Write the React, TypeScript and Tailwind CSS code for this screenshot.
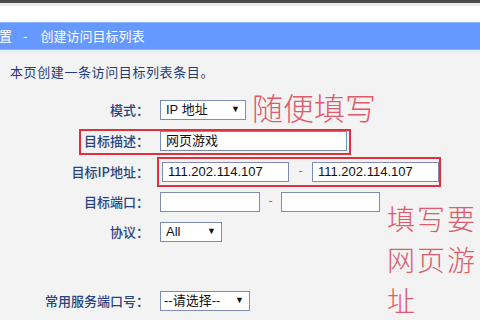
import React from "react";

const Label = ({ children }: { children: React.ReactNode }) => (
  <div className="w-[150px] shrink-0 pr-[1px] text-right text-[13px] font-medium text-[#28447e]">{children}</div>
);

const Box = ({ w, children }: { w: string; children?: React.ReactNode }) => (
  <div className={`${w} h-[20px] bg-white border border-[#7d8db6] flex items-center px-[5px] text-[13px] text-[#111] font-['Liberation_Sans','Noto_Sans_CJK_SC',sans-serif]`}>
    {children}
  </div>
);

const Arrow = () => <span className="ml-auto text-[9px] text-[#111]">▼</span>;

export default function App() {
  return (
    <div className="relative w-[480px] h-[320px] overflow-hidden bg-[#f3f3f3] font-['Noto_Sans_CJK_SC',sans-serif]">
      <div className="h-[3px] bg-[#4a4a4a]" />
      <div className="h-[3px] bg-[#e9e9e9]" />
      <div className="h-[16px] bg-white" />
      <div className="h-[28px] bg-[#6699ff] border-y border-[#8db2ff] flex items-center text-[13px] text-white whitespace-pre">
        <span className="-ml-[1px]">置</span>
        <span className="ml-[11px]">-</span>
        <span className="ml-[13px]">创建访问目标列表</span>
      </div>
      <div className="h-[4px] bg-[#e6eef7]" />
      <div className="pt-[9px] pl-[10px] text-[13px] leading-[18px] tracking-[0.6px] text-[#1e3c7a]">本页创建一条访问目标列表条目。</div>

      <div className="mt-[14px] flex flex-col">
        <div className="flex items-center gap-[10px] h-[30px]">
          <Label>模式：</Label>
          <Box w="w-[86px]">
            IP 地址
            <Arrow />
          </Box>
        </div>
        <div className="flex items-center gap-[10px] h-[32px]">
          <Label>目标描述：</Label>
          <Box w="w-[187px]">网页游戏</Box>
        </div>
        <div className="flex items-center gap-[10px] h-[30px]">
          <Label>目标IP地址：</Label>
          <div className="flex items-center">
            <Box w="w-[127px] ml-[2px]">111.202.114.107</Box>
            <span className="w-[23px] text-center text-[12px] text-[#666] -mt-[5px]">-</span>
            <Box w="w-[127px]">111.202.114.107</Box>
          </div>
        </div>
        <div className="flex items-center gap-[10px] h-[30px]">
          <Label>目标端口：</Label>
          <div className="flex items-center">
            <Box w="w-[100px]" />
            <span className="w-[21px] text-center text-[12px] text-[#666] -mt-[5px]">-</span>
            <Box w="w-[99px]" />
          </div>
        </div>
        <div className="flex items-center gap-[10px] h-[30px]">
          <Label>协议：</Label>
          <Box w="w-[62px]">
            All
            <Arrow />
          </Box>
        </div>
        <div className="flex items-center gap-[10px] h-[30px] mt-[39px]">
          <Label>常用服务端口号：</Label>
          <Box w="w-[90px]">
            <span className="-ml-[2px]">--请选择--</span>
            <Arrow />
          </Box>
        </div>
      </div>

      <div className="absolute left-[79px] top-[129px] w-[272px] h-[26px] border-2 border-[#e0303c]" />
      <div className="absolute left-[157px] top-[157px] w-[284px] h-[30px] border-2 border-[#e0303c]" />

      <div className="absolute left-[252px] top-[88px] text-[31px] leading-[38px] font-light text-[#df5a6a]">随便填写</div>
      <div className="absolute left-[387px] top-[198px] w-[93px] flex flex-col text-[28px] tracking-[2px] font-light text-[#df5a6a]">
        <div className="h-[41px] leading-[41px]">填写要</div>
        <div className="h-[41px] leading-[41px]">网页游</div>
        <div className="h-[41px] leading-[41px]">址</div>
      </div>
    </div>
  );
}
